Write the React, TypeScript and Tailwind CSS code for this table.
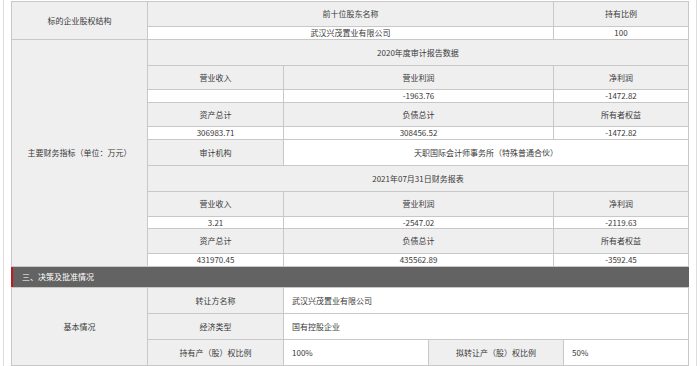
import React from 'react'

const g = 'bg-[#efefef] border border-[#c8c8c8] text-center p-0'
const w = 'bg-white border border-[#c8c8c8] text-center p-0'
const wl = 'bg-white border border-[#c8c8c8] text-left pl-2 p-0'

export default function App() {
  return (
    <div
      className="w-[700px] h-[366px] overflow-hidden bg-white text-[8px] leading-none text-[#3a3a3a]"
      style={{ fontFamily: '"Noto Sans CJK SC", "Noto Sans", sans-serif' }}
    >
      <div className="ml-[3px] w-[694px] h-full border-x border-[#dcdcdc] px-[7px] pt-[1px]">
        <table className="w-[677px] table-fixed border-collapse">
          <colgroup>
            <col className="w-[136px]" />
            <col className="w-[136px]" />
            <col className="w-[270px]" />
            <col className="w-[135px]" />
          </colgroup>
          <tbody>
            <tr className="h-[25px]">
              <td rowSpan={2} className={g}>标的企业股权结构</td>
              <td colSpan={2} className={g}>前十位股东名称</td>
              <td className={g}>持有比例</td>
            </tr>
            <tr className="h-[13px]">
              <td colSpan={2} className={w}>武汉兴茂置业有限公司</td>
              <td className={w}>100</td>
            </tr>
            <tr className="h-[26px]">
              <td rowSpan={11} className={g}>主要财务指标（单位：万元）</td>
              <td colSpan={3} className={g}>2020年度审计报告数据</td>
            </tr>
            <tr className="h-[24px]">
              <td className={g}>营业收入</td>
              <td className={g}>营业利润</td>
              <td className={g}>净利润</td>
            </tr>
            <tr className="h-[13px]">
              <td className={w}></td>
              <td className={w}>-1963.76</td>
              <td className={w}>-1472.82</td>
            </tr>
            <tr className="h-[24px]">
              <td className={g}>资产总计</td>
              <td className={g}>负债总计</td>
              <td className={g}>所有者权益</td>
            </tr>
            <tr className="h-[13px]">
              <td className={w}>306983.71</td>
              <td className={w}>308456.52</td>
              <td className={w}>-1472.82</td>
            </tr>
            <tr className="h-[26px]">
              <td className={g}>审计机构</td>
              <td colSpan={2} className={w}>天职国际会计师事务所（特殊普通合伙）</td>
            </tr>
            <tr className="h-[26px]">
              <td colSpan={3} className={g}>2021年07月31日财务报表</td>
            </tr>
            <tr className="h-[25px]">
              <td className={g}>营业收入</td>
              <td className={g}>营业利润</td>
              <td className={g}>净利润</td>
            </tr>
            <tr className="h-[12px]">
              <td className={w}>3.21</td>
              <td className={w}>-2547.02</td>
              <td className={w}>-2119.63</td>
            </tr>
            <tr className="h-[25px]">
              <td className={g}>资产总计</td>
              <td className={g}>负债总计</td>
              <td className={g}>所有者权益</td>
            </tr>
            <tr className="h-[13px]">
              <td className={w}>431970.45</td>
              <td className={w}>435562.89</td>
              <td className={w}>-3592.45</td>
            </tr>
          </tbody>
        </table>

        <div className="h-[20px] flex items-center bg-[#636363] border-l-2 border-[#c8161d] pl-[9px] text-white">
          三、决策及批准情况
        </div>

        <table className="w-[677px] table-fixed border-collapse">
          <colgroup>
            <col className="w-[136px]" />
            <col className="w-[136px]" />
            <col className="w-[145px]" />
            <col className="w-[135px]" />
            <col className="w-[125px]" />
          </colgroup>
          <tbody>
            <tr className="h-[26px]">
              <td rowSpan={3} className={g}>基本情况</td>
              <td className={g}>转让方名称</td>
              <td colSpan={3} className={wl}>武汉兴茂置业有限公司</td>
            </tr>
            <tr className="h-[26px]">
              <td className={g}>经济类型</td>
              <td colSpan={3} className={wl}>国有控股企业</td>
            </tr>
            <tr className="h-[26px]">
              <td className={g}>持有产（股）权比例</td>
              <td className={wl}>100%</td>
              <td className={g}>拟转让产（股）权比例</td>
              <td className={wl}>50%</td>
            </tr>
          </tbody>
        </table>
      </div>
    </div>
  )
}
